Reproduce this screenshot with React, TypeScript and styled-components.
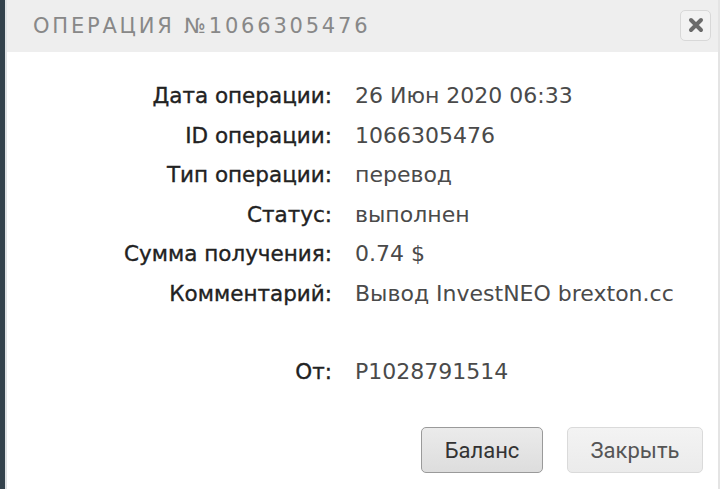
import React from "react";
import styled, { createGlobalStyle } from "styled-components";

const GlobalStyle = createGlobalStyle`
  html, body {
    margin: 0;
    padding: 0;
    background: #ffffff;
  }
  body {
    font-family: "DejaVu Sans", "Noto Sans", sans-serif;
  }
`;

interface Row {
  label: string;
  value: string;
  gapBefore?: boolean;
}

const rows: Row[] = [
  { label: "Дата операции:", value: "26 Июн 2020 06:33" },
  { label: "ID операции:", value: "1066305476" },
  { label: "Тип операции:", value: "перевод" },
  { label: "Статус:", value: "выполнен" },
  { label: "Сумма получения:", value: "0.74 $" },
  { label: "Комментарий:", value: "Вывод InvestNEO brexton.cc" },
  { label: "От:", value: "P1028791514", gapBefore: true },
];

const App: React.FC = () => {
  return (
    <>
      <GlobalStyle />
      <Screen>
        <SideBar />
        <Dialog>
          <Header>
            <Title>Операция №1066305476</Title>
            <CloseIcon aria-label="close">
              <svg width="16" height="16" viewBox="0 0 16 16">
                <path
                  d="M3 3 L13 13 M13 3 L3 13"
                  stroke="#6a6a6a"
                  strokeWidth="4"
                  strokeLinecap="round"
                />
              </svg>
            </CloseIcon>
          </Header>
          <Body>
            <Details>
              {rows.map((row) => (
                <React.Fragment key={row.label}>
                  <Label $gap={row.gapBefore}>{row.label}</Label>
                  <Value $gap={row.gapBefore}>{row.value}</Value>
                </React.Fragment>
              ))}
            </Details>
          </Body>
          <Footer>
            <Button $primary>Баланс</Button>
            <Button>Закрыть</Button>
          </Footer>
        </Dialog>
      </Screen>
    </>
  );
};

const Screen = styled.div`
  display: flex;
  width: 720px;
  height: 489px;
  overflow: hidden;
`;

const SideBar = styled.div`
  width: 5px;
  flex-shrink: 0;
  background: #33424c;
  border-right: 2px solid #dfe2e4;
`;

const Dialog = styled.div`
  flex: 1;
  display: flex;
  flex-direction: column;
  background: #ffffff;
  border-right: 2px solid #e4e4e4;
`;

const Header = styled.div`
  height: 52px;
  display: flex;
  align-items: center;
  justify-content: space-between;
  padding: 0 7px 0 26px;
  background: #eeeeee;
`;

const Title = styled.h1`
  margin: 0;
  font-family: "DejaVu Sans", sans-serif;
  font-weight: normal;
  font-size: 21px;
  letter-spacing: 2.8px;
  text-transform: uppercase;
  color: #888888;
`;

const CloseIcon = styled.button`
  width: 31px;
  height: 31px;
  margin-bottom: 2px;
  display: flex;
  align-items: center;
  justify-content: center;
  padding: 0;
  background: #f2f2f2;
  border: 1px solid #d8d8d8;
  border-radius: 5px;
`;

const Body = styled.div`
  flex: 1;
  padding-top: 30px;
`;

const Details = styled.div`
  display: grid;
  grid-template-columns: 325px 1fr;
  column-gap: 23px;
  row-gap: 12px;
  font-size: 21.5px;
  line-height: 27.5px;
`;

const Label = styled.div<{ $gap?: boolean }>`
  text-align: right;
  color: #222222;
  -webkit-text-stroke: 0.35px #222222;
  margin-top: ${({ $gap }) => ($gap ? "39px" : "0")};
`;

const Value = styled.div<{ $gap?: boolean }>`
  color: #4a4a4a;
  white-space: nowrap;
  font-size: 22px;
  margin-top: ${({ $gap }) => ($gap ? "39px" : "0")};
`;

const Footer = styled.div`
  display: flex;
  justify-content: flex-end;
  gap: 24px;
  padding: 0 15px 16px 0;
`;

const Button = styled.button<{ $primary?: boolean }>`
  height: 46px;
  padding: 0;
  width: ${({ $primary }) => ($primary ? "122px" : "136px")};
  font-family: Roboto, "Liberation Sans", sans-serif;
  font-size: 22px;
  color: ${({ $primary }) => ($primary ? "#333333" : "#555555")};
  background: ${({ $primary }) =>
    $primary
      ? "linear-gradient(#ebebeb, #dddddd)"
      : "linear-gradient(#f3f3f3, #ebebeb)"};
  border: 1px solid ${({ $primary }) => ($primary ? "#9a9a9a" : "#dadada")};
  border-radius: 5px;
`;

export default App;
